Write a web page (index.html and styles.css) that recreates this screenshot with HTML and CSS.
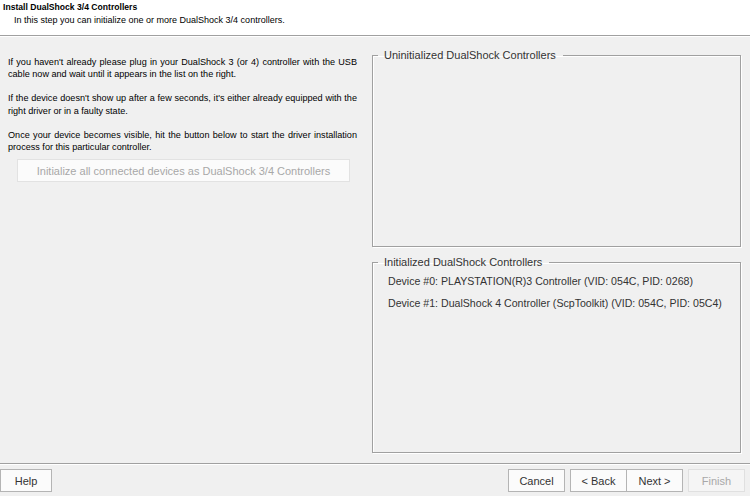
FILE: index.html
```html
<!DOCTYPE html>
<html>
<head>
<meta charset="utf-8">
<link rel="stylesheet" href="styles.css">
</head>
<body>
<div class="wizard">
  <div class="header">
    <div class="title">Install DualShock 3/4 Controllers</div>
    <div class="subtitle">In this step you can initialize one or more DualShock 3/4 controllers.</div>
  </div>
  <div class="main">
    <div class="left">
      <p class="para">
        <span class="line j">If you haven't already please plug in your DualShock 3 (or 4) controller with the USB</span>
        <span class="line">cable now and wait until it appears in the list on the right.</span>
      </p>
      <p class="para">
        <span class="line j">If the device doesn't show up after a few seconds, it's either already equipped with the</span>
        <span class="line">right driver or in a faulty state.</span>
      </p>
      <p class="para last">
        <span class="line j">Once your device becomes visible, hit the button below to start the driver installation</span>
        <span class="line">process for this particular controller.</span>
      </p>
      <button class="init-btn" disabled>Initialize all connected devices as DualShock 3/4 Controllers</button>
    </div>
    <div class="right">
      <fieldset class="group group-top">
        <legend>Uninitialized DualShock Controllers</legend>
      </fieldset>
      <fieldset class="group group-bottom">
        <legend>Initialized DualShock Controllers</legend>
        <div class="device">Device #0: PLAYSTATION(R)3 Controller (VID: 054C, PID: 0268)</div>
        <div class="device">Device #1: DualShock 4 Controller (ScpToolkit) (VID: 054C, PID: 05C4)</div>
      </fieldset>
    </div>
  </div>
  <div class="footer">
    <button class="btn help">Help</button>
    <div class="nav">
      <button class="btn cancel">Cancel</button>
      <div class="pair">
        <button class="btn back">&lt; Back</button>
        <button class="btn next">Next &gt;</button>
      </div>
      <button class="btn finish" disabled>Finish</button>
    </div>
  </div>
</div>
</body>
</html>
```
FILE: styles.css
```css
html, body {
  margin: 0;
  padding: 0;
  background: #f0f0f0;
}
.wizard {
  width: 750px;
  height: 496px;
  display: flex;
  flex-direction: column;
  font-family: "Liberation Sans", Arial, sans-serif;
  color: #000;
  overflow: hidden;
}
.header {
  height: 35px;
  flex: none;
  background: #fff;
  border-bottom: 1px solid #a0a0a0;
  box-shadow: 0 1px 0 #fff;
  box-sizing: content-box;
}
.title {
  font-size: 8.6px;
  font-weight: bold;
  line-height: 11px;
  padding: 2px 0 0 3px;
}
.subtitle {
  font-size: 9px;
  line-height: 11px;
  padding: 2px 0 0 14px;
}
.main {
  flex: 1;
  display: flex;
  padding: 12px 9px 0 8px;
  gap: 15px;
}
.left {
  width: 349px;
  display: flex;
  flex-direction: column;
  padding-top: 8px;
}
.para {
  margin: 0 0 11.5px 0;
  font-size: 9.1px;
  line-height: 12.4px;
}
.para.last {
  margin-bottom: 6px;
}
.line {
  display: block;
  white-space: nowrap;
}
.line.j {
  text-align: justify;
  text-align-last: justify;
}
.init-btn {
  margin: 0 0 0 9px;
  width: 333px;
  height: 23px;
  background: #fbfbfb;
  border: 1px solid #e2e2e2;
  color: #a8a8a8;
  font-family: "Liberation Sans", Arial, sans-serif;
  font-size: 11px;
  padding: 0;
}
.right {
  width: 369px;
  display: flex;
  flex-direction: column;
  gap: 8px;
}
.group {
  box-sizing: border-box;
  margin: 0;
  padding: 0 15px 0 15px;
  border: 1px solid #a0a0a0;
  box-shadow: 1px 1px 0 #fff, inset 1px 1px 0 #fff;
  min-width: 0;
}
.group legend {
  margin-left: -10px;
  padding: 0 7px 0 6px;
  font-size: 11px;
  line-height: 14px;
  color: #333;
}
.group-top {
  height: 199px;
  flex: none;
}
.group-bottom {
  height: 198px;
  flex: none;
  padding-top: 5px;
}
.device {
  font-size: 10.6px;
  line-height: 14px;
  color: #333;
  margin-bottom: 8px;
  white-space: nowrap;
}
.footer {
  box-sizing: border-box;
  height: 33px;
  flex: none;
  border-top: 1px solid #a0a0a0;
  box-shadow: inset 0 1px 0 #fff;
  display: flex;
  justify-content: space-between;
  align-items: flex-start;
  padding: 5px 5px 0 0;
}
.btn {
  height: 23px;
  width: 57px;
  padding: 0;
  background: #fbfbfb;
  border: 1px solid #b4b4b4;
  font-family: "Liberation Sans", Arial, sans-serif;
  font-size: 11px;
  color: #333;
}
.help {
  width: 52px;
}
.nav {
  display: flex;
  gap: 5px;
}
.pair {
  display: flex;
}
.back {
  width: 57px;
}
.next {
  width: 56px;
  border-left: none;
}
.finish {
  background: #f5f5f5;
  border-color: #e0e0e0;
  color: #a8a8a8;
}
```
